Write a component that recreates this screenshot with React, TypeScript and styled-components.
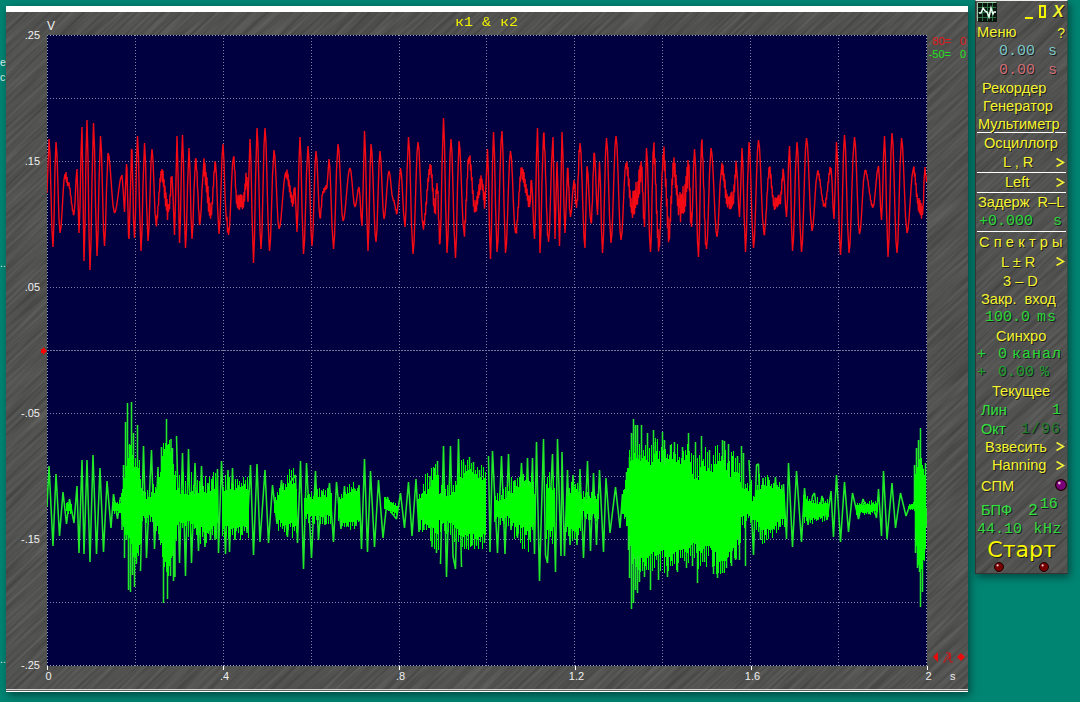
import { ReactNode } from "react";
import styled, { createGlobalStyle } from "styled-components";

type Point = [number, number];
type RedPoint = [number, number, number?];
// x, top, bottom, length of the random tips
type Core = [number, number, number, number];

const PLOT = { left: 47, top: 35, width: 880, height: 631 };

// x, y, noise until the next point
const redPoints: RedPoint[] = [
  [47, 193], [49, 139], [53, 247], [56, 142], [60, 233], [65, 174, 5], [68, 182, 3], [74, 214], [77, 169],
  [79, 233], [82, 127], [84, 261], [87, 120], [90, 270], [93.5, 123], [97, 256], [100.5, 136], [104.5, 246],
  [108, 153], [114.5, 213], [122, 175], [124.5, 212], [126.5, 164, 4], [129, 239], [131.5, 149, 5], [134.5, 238],
  [137.5, 136], [141, 251], [144.5, 143], [148, 241], [152, 149], [156, 223, 5], [161.5, 174, 10], [168.5, 212, 7],
  [172, 176], [174.5, 235], [177, 136], [179.5, 243], [182.5, 135], [185.5, 248], [189, 148], [192, 239],
  [195.5, 159, 4], [200, 223], [203.5, 168, 11], [211, 212, 5], [215.5, 163], [219, 234], [223, 144], [226, 214, 6],
  [228.5, 235], [233.5, 157, 4], [237, 202, 9], [243, 202, 9], [247, 177, 5], [248, 202], [250, 139], [253.5, 263],
  [257, 128], [261, 249], [265, 128], [269.5, 251], [274, 150], [279, 229], [286, 172, 6], [293, 202, 8], [295, 187],
  [297, 232], [300, 137], [303.5, 254], [308, 146], [312, 246], [316, 151], [320, 218, 3], [323, 191, 3], [327, 187],
  [329, 159], [333.5, 249], [338, 144], [343, 221], [350, 168], [355, 207], [359, 187], [362, 226], [364.5, 131],
  [368, 251], [371, 144], [376, 242], [380, 151], [384, 219], [389, 171], [393, 199, 2], [397, 213], [400.5, 168],
  [405, 227], [408.5, 137], [413, 254], [418, 142], [423, 226, 5], [430.5, 168, 8], [435, 210, 9], [437, 183, 8],
  [440, 243], [443.5, 118], [447, 253], [451, 139], [455.5, 258], [459, 141], [464, 232, 7], [469, 157, 6],
  [475, 208, 8], [481.5, 182, 8], [485, 203], [487.5, 149], [490.5, 259], [493.5, 132], [497, 252], [502, 131],
  [505.5, 253], [510.5, 151], [515.5, 233, 6], [521.5, 172, 7], [530, 203, 5], [531.5, 180], [534.5, 239],
  [537.5, 128], [540, 253], [543.5, 134, 5], [548.5, 242], [553, 137], [555, 239], [557, 162], [559.5, 246],
  [562, 132], [565, 233], [567.5, 168, 5], [570.5, 217], [574, 180, 8], [576.5, 208, 6], [580, 143], [585, 248],
  [587, 166], [591, 223, 5], [594.5, 154], [597.5, 215], [599.5, 162], [602.5, 253], [606.5, 138], [611, 243],
  [616, 136], [621, 240], [626, 163, 8], [632, 208, 16], [637, 195, 17], [641.5, 170, 8], [644.5, 227], [646.5, 148],
  [650.5, 252, 5], [653.5, 150, 10], [659, 246, 5], [663.5, 155, 12], [669, 232, 10], [673.5, 168, 12],
  [679.5, 208, 16], [684, 200, 16], [688.5, 170, 14], [691.5, 227], [694.5, 149], [698.5, 257], [701.5, 143, 7],
  [706.5, 249], [711, 148], [717, 237], [721.5, 168, 8], [728.5, 204, 10], [733, 198, 8], [736.5, 167], [739.5, 217],
  [742, 148], [745.5, 252], [749, 142], [753.5, 248], [758.5, 140], [764, 234, 4], [769.5, 170, 5], [774, 203, 7],
  [780, 200, 6], [783.5, 172], [786.5, 217], [789.5, 146], [792.5, 251], [797, 142], [801.5, 252], [806.5, 138],
  [812, 231], [817.5, 172, 3], [824.5, 206, 4], [831, 168], [834, 219], [836.5, 142], [840.5, 255], [844.5, 135],
  [849, 253], [854.5, 137], [859.5, 234], [865, 170, 2], [873, 207], [878.5, 166], [881.5, 220], [884.5, 136],
  [888, 257], [892, 133], [897, 253], [901.5, 138], [907, 233], [913.5, 168, 5], [918, 202, 9], [922.5, 215, 4],
  [925, 167, 5], [926.5, 182],
];

const greenPoints: Point[] = [
  [47, 507], [49, 466], [53, 546], [56, 474], [59.5, 536], [63, 492], [66.5, 524], [69.5, 499], [74, 523], [77, 486],
  [79, 553], [82, 460], [84, 554], [87, 460], [90, 562], [93, 455], [96.5, 554], [100, 468], [103.5, 552], [107, 481],
  [111, 528], [113.5, 494], [117.5, 519], [120.5, 497], [122, 530], [123.5, 465], [124.5, 558], [125.5, 422],
  [126.5, 540], [127.5, 403], [128.5, 590], [129.5, 445], [130.5, 592], [131.5, 402], [132.5, 575], [133.5, 433],
  [134.5, 587], [135.5, 470], [136.5, 563], [137.5, 425], [140.5, 571], [143.5, 446], [146.5, 558], [151.5, 450],
  [154.5, 549], [158, 467], [159.5, 540], [161.5, 447], [163.5, 603], [164.5, 449], [166.5, 419], [167.5, 599],
  [168.5, 450], [170.5, 576], [171, 439], [172.5, 448], [173.5, 581], [175, 577], [176.5, 436], [179.5, 563],
  [182.5, 453], [185.5, 576], [188.5, 449], [191.5, 563], [195, 463], [198.5, 551], [201.5, 466], [205, 547],
  [208, 483], [210.5, 540], [213, 477], [215, 540], [217.5, 469], [218.5, 553], [221.5, 461], [225.5, 554],
  [228, 470], [229.5, 552], [232.5, 468], [235, 540], [238, 485], [242, 535], [244.5, 484], [247, 533], [250.5, 465],
  [253.5, 555], [257, 464], [260, 542], [265, 470], [268.5, 543], [272.5, 485], [277, 524], [281.5, 480], [287.5, 537],
  [290.5, 482], [295.5, 475], [297.5, 543], [300.5, 461], [303.5, 569], [306.5, 463], [311.5, 558], [315.5, 471],
  [318.5, 540], [322, 491], [325, 525], [329.5, 483], [333.5, 542], [336.5, 482], [341, 529], [344.5, 486],
  [347, 526], [354, 488], [356, 526], [359, 485], [361.5, 549], [364.5, 459], [367.5, 552], [370.5, 471], [374.5, 547],
  [378.5, 480], [383, 538], [387.5, 497], [391, 512], [396.5, 519], [400.5, 493], [404.5, 528], [408.5, 482],
  [412, 536], [416, 479], [419, 532], [422, 494], [424, 530], [430, 476], [432, 547], [434.5, 468], [436.5, 553],
  [437.5, 461], [440.5, 564], [443.5, 446], [446.5, 577], [450.5, 446], [453, 556], [455.5, 569], [458.5, 439],
  [461.5, 567], [463.5, 462], [466.5, 546], [469.5, 457], [471.5, 546], [473.5, 462], [476.5, 545], [479.5, 470],
  [484.5, 543], [488.5, 456], [490, 552], [492.5, 451], [497.5, 553], [501.5, 456], [505, 554], [508.5, 454],
  [511, 530], [515, 480], [517.5, 538], [521.5, 463], [525, 535], [527.5, 458], [530, 540], [532.5, 458],
  [534.5, 554], [536.5, 442], [539.5, 581], [543.5, 439], [545.5, 555], [547.5, 563], [552.5, 454], [555.5, 572],
  [557.5, 439], [561, 556], [562, 452], [564.5, 556], [567.5, 470], [570, 545], [573, 475], [577, 545], [580, 469],
  [583.5, 558], [587.5, 461], [590.5, 551], [593.5, 473], [596.5, 545], [599.5, 470], [603.5, 552], [606, 478],
  [610, 533], [615.5, 487], [620, 528], [622.5, 494], [625, 514], [626.5, 472], [628.5, 550], [629.5, 457], [629.5, 578],
  [631.5, 433], [631.5, 609], [633.5, 419], [633.5, 603], [635.5, 425], [635.5, 590], [637.5, 425], [637.5, 593],
  [639.5, 455], [639.5, 582], [641.5, 425], [644.5, 577], [647.5, 433], [650.5, 590], [653.5, 430], [655.5, 442],
  [658.5, 580], [662.5, 432], [664.5, 440], [667.5, 577], [670.5, 445], [674.5, 442], [677.5, 572], [682.5, 447],
  [686.5, 568], [688.5, 433], [692.5, 566], [695.5, 442], [697.5, 583], [701.5, 436], [704.5, 562], [709.5, 450],
  [713.5, 574], [717.5, 578], [722.5, 440], [722.5, 573], [724.5, 441], [726.5, 568], [728.5, 444], [731.5, 566],
  [732.5, 456], [735.5, 560], [737.5, 456], [739.5, 560], [741.5, 446], [743.5, 453], [745.5, 566], [749, 460],
  [753.5, 555], [756.5, 465], [758.5, 464], [760.5, 540], [763, 478], [765.5, 535], [768, 477], [771, 530],
  [775.5, 477], [779, 527], [783.5, 484], [786.5, 539], [788.5, 463], [792.5, 547], [796.5, 471], [801.5, 542],
  [804.5, 488], [808, 525], [812.5, 496], [814.5, 493], [818, 520], [822, 496], [827, 520], [831, 491], [833.5, 537],
  [836.5, 475], [840.5, 542], [844.5, 482], [848.5, 532], [852.5, 493], [858.5, 519], [863, 499], [869, 514],
  [872, 503], [876.5, 518], [878.5, 489], [881.5, 536], [883.5, 471], [887, 539], [892, 483], [895.5, 528],
  [900.5, 493], [906, 516], [910, 505], [913, 508], [914.5, 465], [915.5, 553], [916.5, 448], [917.5, 568],
  [918.5, 440], [919.5, 572], [920.5, 428], [920.5, 607], [922.5, 592], [922.5, 468], [924.5, 553], [925.5, 463],
  [926.5, 527],
];

// here the cycles are too short to be told apart
const burstRanges: Point[] = [[122, 138], [160, 175], [430, 440], [462, 486], [626, 748], [914, 927]];

const greenCores: Core[][] = [
  [[66, 504, 510, 4], [72, 506, 512, 4]],
  [[113, 504, 510, 4], [121, 504, 512, 4]],
  [[121, 494, 518, 6], [125, 474, 533, 10], [130, 448, 536, 12], [134, 468, 560, 12], [139, 472, 542, 14], [142, 500, 514, 8]],
  [[142, 498, 516, 8], [151, 500, 514, 12], [159, 486, 526, 16]],
  [[159, 480, 530, 10], [163, 452, 555, 12], [168, 447, 567, 12], [172, 462, 550, 12], [176, 490, 535, 12]],
  [[176, 494, 518, 26], [195, 497, 520, 24]],
  [[195, 496, 522, 24], [205, 494, 528, 18], [218, 490, 522, 20]],
  [[222, 494, 524, 22], [235, 492, 525, 18], [249, 492, 520, 18]],
  [[240, 488, 520, 10], [249, 490, 526, 8]],
  [[274, 504, 511, 6], [278, 496, 518, 14], [284, 492, 522, 16], [291, 482, 522, 18], [297, 492, 524, 16]],
  [[304, 500, 514, 8], [320, 498, 514, 12], [332, 498, 514, 10]],
  [[338, 502, 516, 8], [345, 496, 522, 10], [352, 492, 520, 12], [360, 494, 518, 8]],
  [[384, 498, 508, 3], [398, 508, 514, 3]],
  [[418, 502, 514, 14], [426, 494, 520, 22], [433, 482, 528, 22], [439, 480, 528, 22]],
  [[439, 498, 518, 16], [448, 500, 520, 20], [458, 488, 524, 20]],
  [[458, 480, 532, 20], [470, 474, 532, 20], [478, 480, 536, 16], [486, 484, 528, 20]],
  [[494, 502, 514, 12], [508, 500, 514, 14]],
  [[508, 496, 516, 18], [515, 492, 522, 20], [521, 488, 526, 24], [528, 486, 528, 24], [535, 496, 520, 20]],
  [[546, 490, 526, 20], [555, 494, 524, 22]],
  [[566, 500, 524, 16], [575, 490, 530, 18], [581, 496, 522, 16]],
  [[581, 500, 510, 10], [599, 500, 514, 8]],
  [[621, 504, 508, 3], [626, 482, 518, 8], [630, 462, 540, 20], [635, 457, 554, 24], [640, 466, 552, 24], [645, 458, 560, 20],
    [650, 470, 548, 24], [656, 456, 552, 22], [662, 468, 548, 26], [670, 460, 556, 18], [680, 468, 546, 24],
    [688, 455, 548, 18], [692, 478, 536, 24], [697, 486, 540, 30], [702, 466, 548, 24], [709, 476, 540, 24],
    [716, 468, 552, 26], [722, 464, 560, 22], [728, 480, 548, 30], [734, 472, 542, 22], [741, 486, 526, 26]],
  [[741, 490, 515, 18], [752, 494, 512, 14]],
  [[752, 502, 516, 8], [757, 492, 522, 18], [764, 490, 528, 18], [772, 488, 528, 14], [779, 490, 520, 14], [785, 496, 516, 10]],
  [[803, 500, 516, 8], [812, 504, 518, 8], [829, 505, 514, 8]],
  [[856, 506, 512, 5], [878, 504, 511, 5]],
  [[908, 506, 508, 2], [914, 503, 509, 2], [915, 480, 530, 6], [918, 468, 562, 8], [921, 462, 568, 8], [925, 482, 548, 10], [926, 485, 526, 4]],
];

const random = (seed: number) => {
  const value = Math.sin(seed * 12.9898) * 43758.5453;
  return value - Math.floor(value);
};

const redPath = () => {
  const out: string[] = [];
  redPoints.forEach(([x, y, noise = 0], i) => {
    out.push(`${x},${y}`);
    const next = redPoints[i + 1];
    if (!next) return;
    const step = noise ? 0.5 : 1;
    for (let px = x + step; px < next[0] - step / 2; px += step) {
      const t = (px - x) / (next[0] - x);
      const eased = (1 - Math.cos(Math.PI * t)) / 2;
      const side = Math.round(px * 2) % 2 ? 1 : -1;
      const jitter = noise * side * (0.5 + 0.5 * random(px));
      out.push(`${px},${(y + (next[1] - y) * eased + jitter).toFixed(1)}`);
    }
  });
  return `M${out.join("L")}`;
};

const greenPath = () => {
  let d = "";
  let command = "M";
  greenPoints.forEach(([x, y]) => {
    if (burstRanges.some(([from, to]) => x >= from && x <= to)) {
      d += `M${x},${y}V508`;
      command = "M";
      return;
    }
    d += `${command}${x},${y}`;
    command = "L";
  });
  return d;
};

const corePath = () => {
  let d = "";
  greenCores.forEach((core) => {
    for (let i = 0; i < core.length - 1; i++) {
      const [x0, top0, bottom0, tip0] = core[i];
      const [x1, top1, bottom1, tip1] = core[i + 1];
      for (let x = x0; x < x1; x++) {
        const t = (x - x0) / (x1 - x0);
        const tip = tip0 + (tip1 - tip0) * t;
        const up = tip * (x % 2 ? 0.25 + 0.75 * random(x + 3) : 0.3 * random(x + 5));
        const down = tip * (x % 2 ? 0.3 * random(x + 9) : 0.25 + 0.75 * random(x + 7));
        const top = top0 + (top1 - top0) * t - up;
        const bottom = bottom0 + (bottom1 - bottom0) * t + down;
        d += `M${x + 0.5},${top.toFixed(1)}V${bottom.toFixed(1)}`;
      }
    }
  });
  return d;
};

const gridX = [135, 223, 311, 399, 486, 574, 662, 750, 838];
const gridY = [98, 161, 224, 287, 350, 413, 476, 539, 602];

const Brushed = ({ id }: { id: string }) => (
  <Texture aria-hidden="true">
    <filter id={id} x="0" y="0" width="100%" height="100%" colorInterpolationFilters="sRGB">
      <feTurbulence type="fractalNoise" baseFrequency="0.014 0.36" numOctaves="2" seed="8" />
      <feColorMatrix values="0.17 0 0 0 0.235  0.17 0 0 0 0.235  0.17 0 0 0 0.23  0 0 0 0 1" />
    </filter>
    <g transform="rotate(-43)">
      <rect x="-720" y="-20" width="1440" height="1240" filter={`url(#${id})`} />
    </g>
  </Texture>
);

const Scope = () => (
  <ScopeWindow>
    <TitleStrip />
    <ScopeBody>
      <Brushed id="scope-metal" />
      <ScopeHeader>
        <Unit>V</Unit>
        <Title>к1 &amp; к2</Title>
      </ScopeHeader>
      <ScopeMain>
        <YAxis>
          {[".25", ".15", ".05", "-.05", "-.15", "-.25"].map((label) => (
            <YLabel key={label}>{label}</YLabel>
          ))}
          <ZeroMark viewBox="0 0 6 8">
            <path d="M0 2h2V0l4 4-4 4V6H0z" fill="#f00" />
          </ZeroMark>
        </YAxis>
        <Plot viewBox={`${PLOT.left} ${PLOT.top} ${PLOT.width} ${PLOT.height}`}>
          <rect x={PLOT.left} y={PLOT.top} width={PLOT.width} height={PLOT.height} fill="#000040" />
          <g stroke="#7d83a6" strokeDasharray="1 2" shapeRendering="crispEdges">
            {gridX.map((x) => <path key={x} d={`M${x + 0.5} 35V666`} />)}
            {gridY.map((y) => <path key={y} d={`M47 ${y + 0.5}H927`} />)}
            <path d="M47.5 35V666M926.5 35V666M47 35.5H927M47 665.5H927" stroke="#8fa6b4" />
            <path d="M47 350.5H927" stroke="#74789a" strokeDasharray="2 1" />
          </g>
          <path d={redPath()} fill="none" stroke="#f40a14" strokeWidth="1.4" strokeLinejoin="bevel" />
          <path d={greenPath()} fill="none" stroke="#22ea2a" strokeWidth="1.55" strokeLinejoin="bevel" />
          <path d={corePath()} fill="none" stroke="#00ff00" strokeWidth="1" shapeRendering="crispEdges" />
        </Plot>
        <Gutter>
          <Level color="#e01818"><span>80=</span><span>0</span></Level>
          <Level color="#22e022"><span>-50=</span><span>0</span></Level>
          <Markers viewBox="0 0 32 12">
            <path d="M5 1v10L0 6zM28 2l4 4-4 4-4-4z" fill="#e80c0c" />
            <path d="M10 11h2V8l5-6v9h3M13 2h4v6M14 9l3-4" fill="none" stroke="#d01010" />
          </Markers>
        </Gutter>
      </ScopeMain>
      <Footer>
        <XAxis>
          {["0", ".4", ".8", "1.2", "1.6", "2"].map((label) => (
            <XTick key={label}>
              <span>{label}</span>
            </XTick>
          ))}
        </XAxis>
        <Seconds>s</Seconds>
      </Footer>
    </ScopeBody>
    <BottomEdge />
  </ScopeWindow>
);

type ItemProps = {
  height: number;
  left?: number;
  arrow?: boolean;
  line?: boolean;
  spacing?: number;
  children: ReactNode;
};

const Item = ({ height, left = 0, arrow, line, spacing, children }: ItemProps) => (
  <Row $height={height} $left={left} $line={line}>
    <Label $spacing={spacing}>{children}</Label>
    {arrow && <Arrow viewBox="0 0 9 9"><path d="M0.5 0.500l7 4-7 4" /></Arrow>}
  </Row>
);

const Led = ({ size, color }: { size: number; color: string }) => (
  <svg width={size} height={size} viewBox="0 0 10 10">
    <circle cx="5" cy="5" r="4.5" fill={color} stroke="#1c0000" />
    <circle cx="3.6" cy="3.4" r="1.1" fill="#f0c8d8" />
  </svg>
);

const Panel = () => (
  <PanelWindow>
    <Brushed id="panel-metal" />
    <PanelHeader>
      <svg width="20" height="20" viewBox="0 0 20 20">
        <rect width="20" height="20" fill="#0c1410" />
        <path d="M0.5 19.5V0.5H19.5" stroke="#9ac8a4" fill="none" />
        <path d="M5.5 1v18M10.5 1v18M15.5 1v18M1 5.5h18M1 10.5h18M1 15.5h18" stroke="#2c7444" />
        <path d="M2 11h2l2-5 2 3 2 1 2 5 2-9 2 6 1-2h2" stroke="#e8fff0" strokeWidth="1.5" fill="none" />
      </svg>
      <WindowButtons viewBox="0 0 40 16">
        <path d="M1 13h8M16 1h5v11h-5z" />
      </WindowButtons>
      <Close>X</Close>
    </PanelHeader>
    <Row $height={19} $left={1}>
      <Label>Меню</Label>
      <Help>?</Help>
    </Row>
    <Row $height={19} $left={23}><Digits $color="#7cc8c8">0.00</Digits><Digits $color="#7cc8c8" $push={9}>s</Digits></Row>
    <Row $height={18} $left={23}><Digits $color="#d07078">0.00</Digits><Digits $color="#d07078" $push={9}>s</Digits></Row>
    <Item height={18} left={6}>Рекордер</Item>
    <Item height={19} left={7}>Генератор</Item>
    <Item height={17} left={2} line>Мультиметр</Item>
    <Item height={20} left={8}>Осциллогр</Item>
    <Item height={20} left={27} arrow line>L , R</Item>
    <Item height={20} left={29} arrow line>Left</Item>
    <Item height={18} left={2}>Задерж&nbsp; R–L</Item>
    <Row $height={21} $left={3} $line><Digits $color="#28d83a">+0.000</Digits><Digits $color="#28d83a" $push={4}>s</Digits></Row>
    <Item height={20} left={3} spacing={4.2}>Спектры</Item>
    <Item height={20} left={25} arrow>L ± R</Item>
    <Item height={18} left={27}>3 – D</Item>
    <Item height={18} left={5}>Закр.&nbsp; вход</Item>
    <Row $height={18} $left={9}><Digits $color="#28d83a">100.0</Digits><Digits $color="#28d83a" $push={9} $spacing={1}>ms</Digits></Row>
    <Item height={20} left={20}>Синхро</Item>
    <Row $height={17} $left={1}><Digits $color="#28d83a">+</Digits><Digits $color="#28d83a" $gap={12}>0</Digits><Digits $color="#28d83a" $push={4} $spacing={1}>канал</Digits></Row>
    <Row $height={18} $left={1}><Digits $color="#1ca030">+</Digits><Digits $color="#1ca030" $gap={12}>0.00</Digits><Digits $color="#1ca030" $gap={6}>%</Digits></Row>
    <Item height={20} left={16}>Текущее</Item>
    <Row $height={19} $left={5}><Label $color="#30e040">Лин</Label><Digits $color="#28d83a" $push={5}>1</Digits></Row>
    <Row $height={18} $left={5}><Label $color="#30e040">Окт</Label><Digits $color="#1c7c2c" $push={5} $spacing={1}>1/96</Digits></Row>
    <Item height={18} left={9} arrow>Взвесить</Item>
    <Item height={19} left={16} arrow>Hanning</Item>
    <Row $height={22} $left={5}><Label>СПМ</Label><Lamp><Led size={12} color="#780078" /></Lamp></Row>
    <Row $height={24} $left={5}><PowerLabel $color="#30e040">БПФ</PowerLabel><Power>2<sup>16</sup></Power></Row>
    <Row $height={16} $left={1}><Digits $color="#30d840">44.10</Digits><Digits $color="#30d840" $push={4} $spacing={0.5}>kHz</Digits></Row>
    <Start>Старт</Start>
    <Leds>
      <Led size={10} color="#780000" />
      <Led size={10} color="#780000" />
    </Leds>
  </PanelWindow>
);

const App = () => (
  <Desktop>
    <GlobalStyle />
    <DesktopLabels>
      <Clipped $top={55}>e</Clipped>
      <Clipped $top={0}>c</Clipped>
      <Clipped $top={171}>..</Clipped>
      <Clipped $top={381}>..</Clipped>
    </DesktopLabels>
    <Scope />
    <Panel />
  </Desktop>
);

const GlobalStyle = createGlobalStyle`
  * {
    box-sizing: border-box;
  }

  body {
    margin: 0;
    overflow: hidden;
    background-color: #008573;
    font-family: "Liberation Sans", Arial, sans-serif;
  }

  svg {
    display: block;
    flex-shrink: 0;
  }
`;

const Desktop = styled.div`
  display: flex;
  align-items: flex-start;
  width: 1080px;
  height: 702px;
  background-color: #008573;
`;

const DesktopLabels = styled.div`
  display: flex;
  flex-direction: column;
  width: 6px;
  height: 702px;
`;

const Clipped = styled.span<{ $top: number }>`
  margin-top: ${({ $top }) => $top}px;
  color: #e4f4f0;
  font-family: "Liberation Sans", sans-serif;
  font-size: 10.5px;
  line-height: 15px;
`;

const Texture = styled.svg`
  position: absolute;
  inset: 0;
  width: 100%;
  height: 100%;
  z-index: -1;
`;

const ScopeWindow = styled.main`
  display: flex;
  flex-direction: column;
  width: 962px;
  height: 686px;
  margin: 6px 7px 0 0;
  box-shadow: 2px 3px 8px rgba(0, 30, 30, 0.6);
`;

const TitleStrip = styled.div`
  height: 6px;
  background-color: #fff;
`;

const ScopeBody = styled.div`
  position: relative;
  z-index: 0;
  overflow: hidden;
  height: 677px;
  background-color: #505050;
`;

const BottomEdge = styled.div`
  height: 3px;
  border-top: 1px solid #d8d8d8;
  border-bottom: 1px solid #fff;
  background-color: #606060;
`;

const ScopeHeader = styled.div`
  display: flex;
  height: 23px;
  padding-left: 41px;
`;

const Unit = styled.span`
  width: 408px;
  padding-top: 8px;
  color: #f0f0f0;
  font-size: 12px;
  line-height: 13px;
`;

const Title = styled.span`
  color: #f0f000;
  font-family: "Liberation Mono", monospace;
  font-size: 15px;
  line-height: 22px;
  transform: scaleY(0.9);
`;

const ScopeMain = styled.div`
  display: flex;
  height: 631px;
`;

const YAxis = styled.div`
  position: relative;
  display: flex;
  flex-direction: column;
  justify-content: space-between;
  align-items: flex-end;
  width: 41px;
  height: 644px;
  margin-top: -7px;
`;

const YLabel = styled.span`
  height: 14px;
  padding-right: 7px;
  color: #f0f0f0;
  font-size: 11px;
  line-height: 14px;
`;

const ZeroMark = styled.svg`
  position: absolute;
  top: 319px;
  right: 0;
  width: 6px;
  height: 8px;
`;

const Plot = styled.svg`
  width: 880px;
  height: 631px;
`;

const Gutter = styled.div`
  display: flex;
  flex-direction: column;
  width: 41px;
`;

const Level = styled.div`
  display: flex;
  justify-content: space-between;
  width: 39px;
  padding-left: 1px;
  color: ${({ color }) => color};
  font-size: 11px;
  line-height: 13px;

  span:first-child {
    width: 23px;
    text-align: right;
  }
`;

const Markers = styled.svg`
  width: 32px;
  height: 12px;
  margin: auto 0 3px 6px;
`;

const Footer = styled.div`
  display: flex;
  padding-left: 41px;
`;

const XAxis = styled.div`
  display: flex;
  justify-content: space-between;
  width: 881px;
`;

const XTick = styled.div`
  display: flex;
  justify-content: center;
  width: 1px;
  color: #f0f0f0;
  font-size: 11px;
  line-height: 13px;

  &::before {
    content: "";
    flex-shrink: 0;
    width: 1px;
    height: 4px;
    margin-right: -1px;
    background-color: #fff;
  }

  span {
    flex-shrink: 0;
    width: 24px;
    margin: 4px -12px 0 -10px;
    text-align: center;
  }
`;

const Seconds = styled.span`
  padding: 4px 0 0 22px;
  color: #f0f0f0;
  font-size: 11px;
  line-height: 13px;
`;

const PanelWindow = styled.aside`
  position: relative;
  z-index: 0;
  display: flex;
  flex-direction: column;
  width: 93px;
  height: 574px;
  overflow: hidden;
  border: 1px solid #343434;
  border-top: 1px solid #f0f0f0;
  border-right-color: #2c4c44;
  background-color: #505050;
  color: #f4f430;
  text-shadow: 1px 1px 0 #1c1c1c;
  box-shadow: 2px 3px 8px rgba(0, 30, 30, 0.6);
`;

const PanelHeader = styled.header`
  display: flex;
  height: 22px;
  padding: 1px 0 0 1px;
`;

const WindowButtons = styled.svg`
  width: 40px;
  height: 16px;
  margin: 3px -11px 0 27px;
  fill: none;
  stroke: #f4f400;
  stroke-width: 2;
`;

const Close = styled.span`
  font-size: 16px;
  font-style: italic;
  font-weight: bold;
  line-height: 19px;
`;

const Row = styled.div<{ $height: number; $left: number; $line?: boolean }>`
  display: flex;
  align-items: center;
  flex-shrink: 0;
  height: ${({ $height }) => $height}px;
  margin: 0 1px;
  padding-left: ${({ $left }) => Math.max($left - 1, 0)}px;
  border-bottom: ${({ $line }) => ($line ? "1px solid #fff" : "none")};
  white-space: pre;
`;

const Label = styled.span<{ $color?: string; $spacing?: number }>`
  color: ${({ $color }) => $color || "inherit"};
  font-size: 14.6px;
  line-height: 17px;
  letter-spacing: ${({ $spacing }) => $spacing || 0}px;
`;

const Arrow = styled.svg`
  width: 9px;
  height: 9px;
  margin: 0 1px 1px auto;
  fill: none;
  stroke: #f4f430;
  stroke-width: 1.6;
`;

const Help = styled.span`
  margin: 0 1px 0 auto;
  font-size: 14px;
`;

const Digits = styled.span<{ $color: string; $push?: number; $gap?: number; $spacing?: number }>`
  margin-left: ${({ $push, $gap }) => ($push ? "auto" : `${$gap || 0}px`)};
  padding-right: ${({ $push }) => $push || 0}px;
  color: ${({ $color }) => $color};
  font-family: "Liberation Mono", monospace;
  font-size: 15px;
  line-height: 17px;
  letter-spacing: ${({ $spacing }) => $spacing || 0}px;
`;

const Lamp = styled.span`
  margin: -3px -1px 0 auto;
`;

const PowerLabel = styled(Label)`
  padding-top: 3px;
`;

const Power = styled.span`
  margin-left: 16px;
  padding-top: 3px;
  color: #30e040;
  font-family: "Liberation Mono", monospace;
  font-size: 16px;
  line-height: 20px;

  sup {
    padding-left: 2px;
    font-size: 15px;
    line-height: 0;
    vertical-align: 7px;
  }
`;

const Start = styled.button`
  height: 25px;
  padding: 0;
  border: none;
  background: none;
  color: #f8f800;
  font-family: "DejaVu Sans", sans-serif;
  font-size: 22px;
  line-height: 25px;
  text-shadow: 1px 1px 0 #1c1c1c;
`;

const Leds = styled.div`
  display: flex;
  justify-content: space-between;
  padding: 0 18px;
`;

export default App;
